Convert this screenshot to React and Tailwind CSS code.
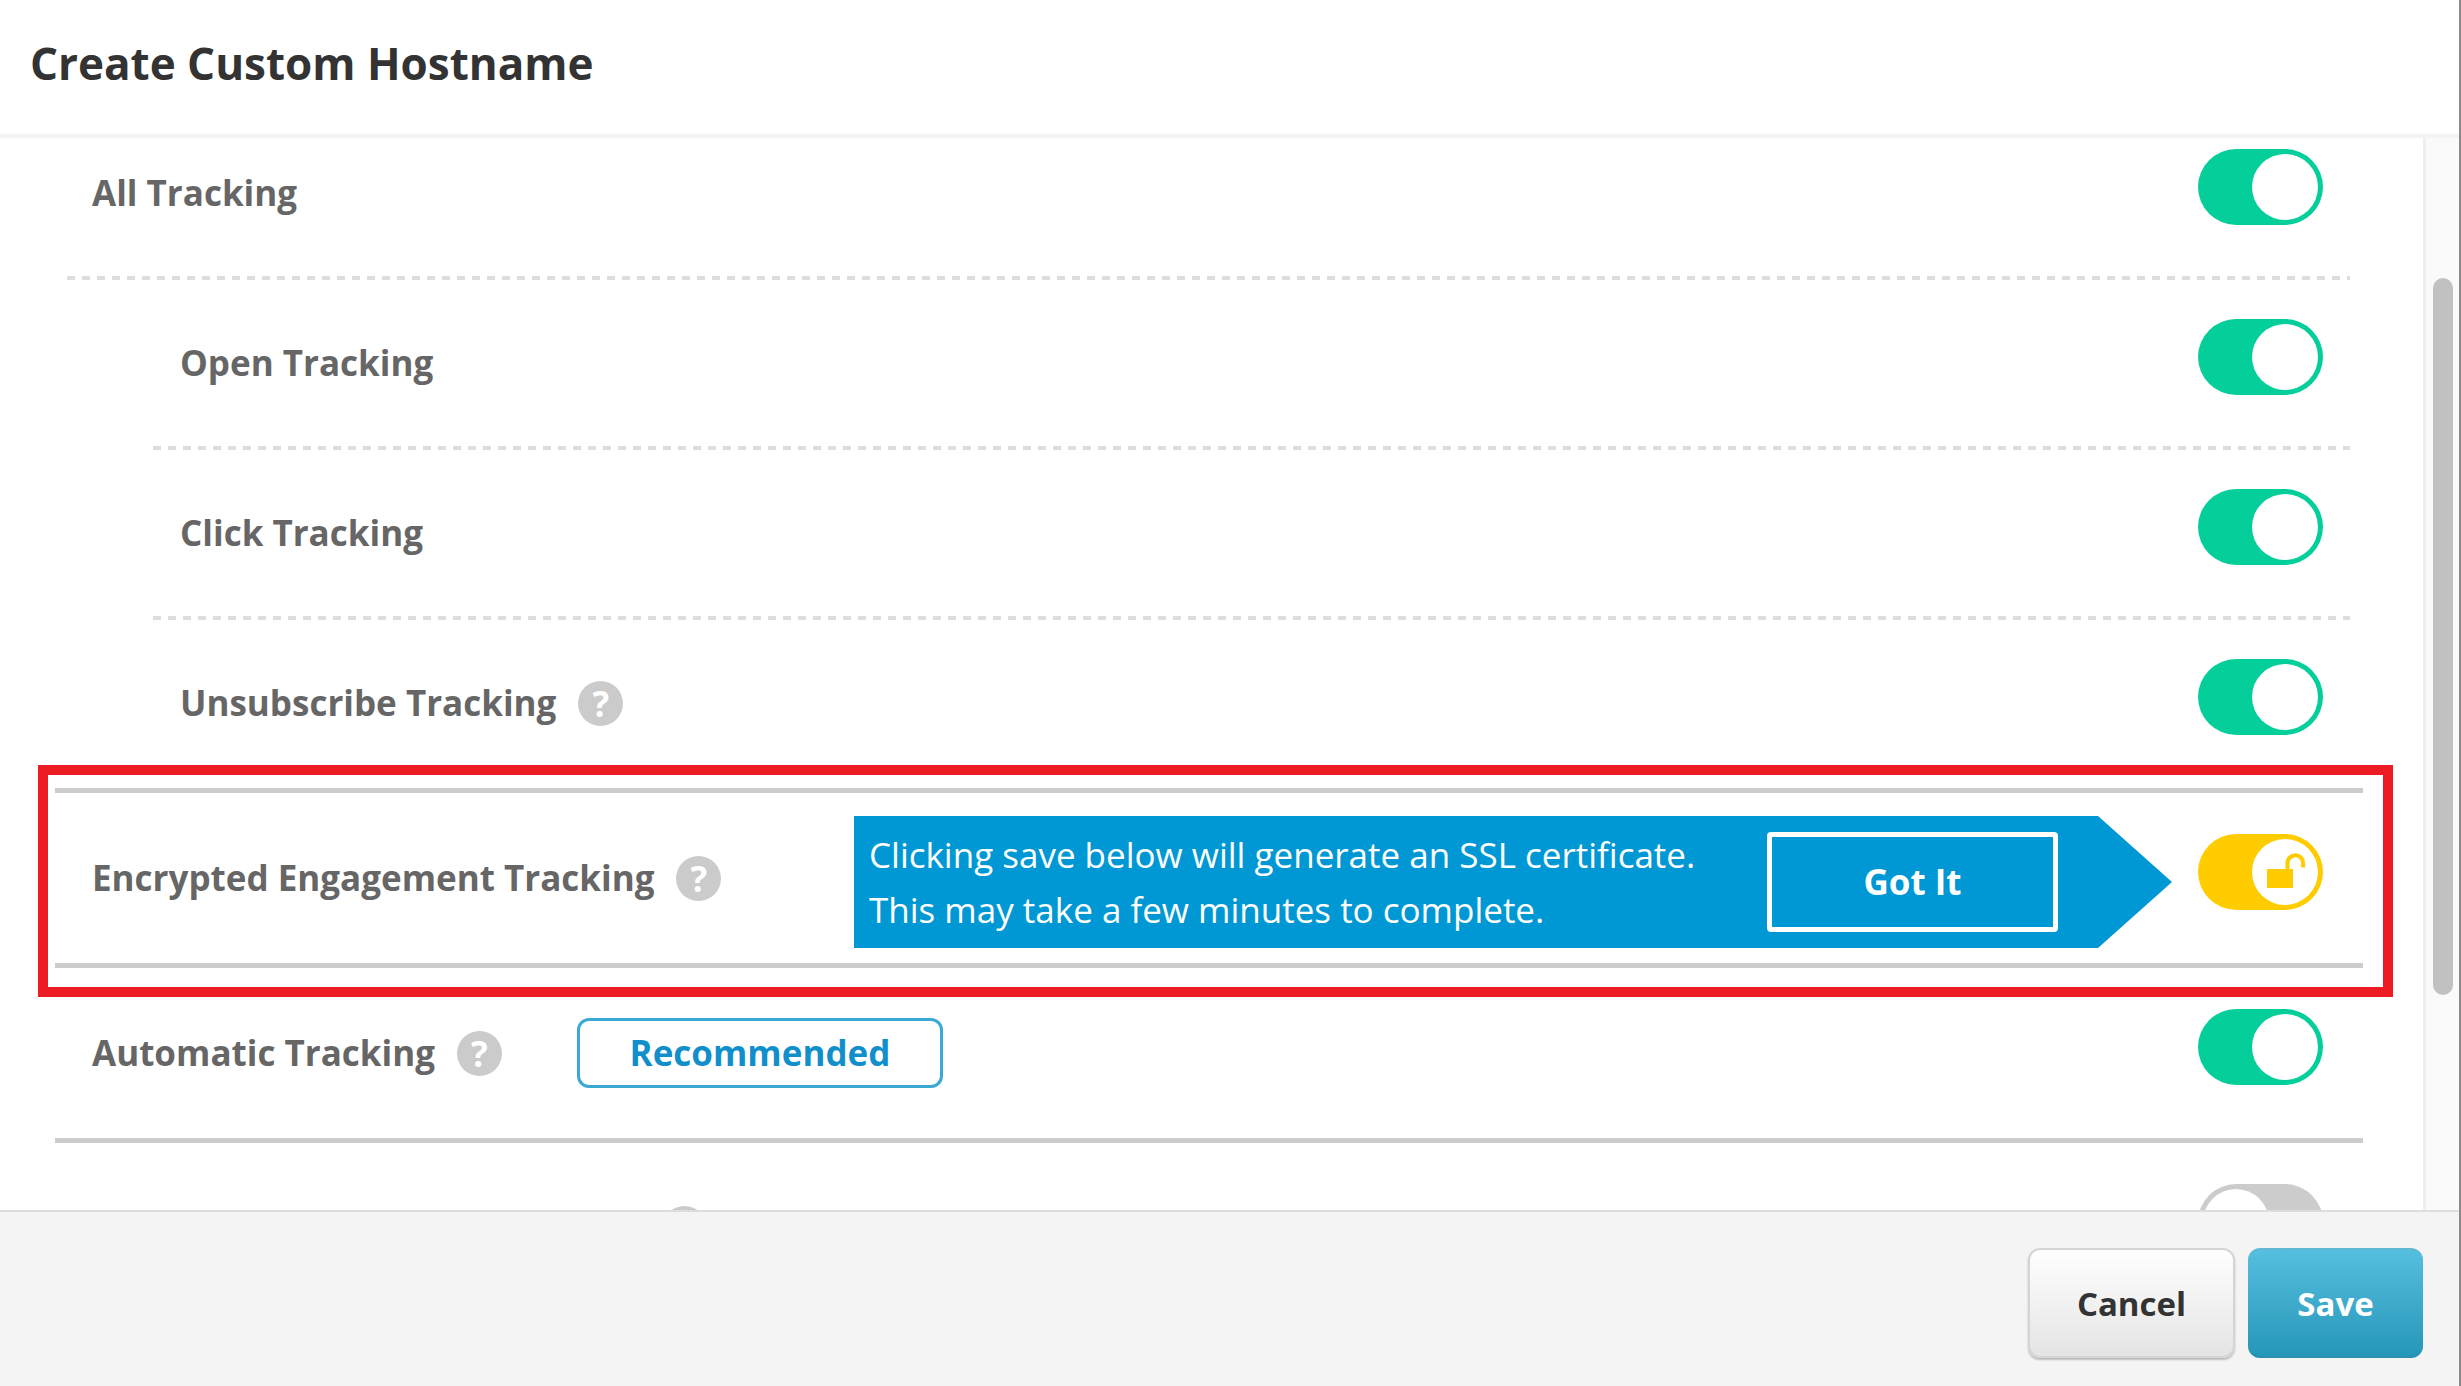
import React, { useState } from 'react';

function HelpIcon({ children = '?' }) {
  return (
    <button
      type="button"
      aria-label="Help"
      className="flex size-[45px] shrink-0 items-center justify-center rounded-full bg-[#cbcbcb] text-[35px] leading-none font-bold text-white"
    >
      {children}
    </button>
  );
}

function Toggle({ id, label, checked, onChange, locked }) {
  const onColor = locked ? 'checked:bg-[#ffcc00]' : 'checked:bg-[#04cf9a]';
  return (
    <span className="relative mb-3 flex shrink-0">
      <input
        id={id}
        type="checkbox"
        aria-label={label}
        checked={checked}
        onChange={onChange}
        className={`h-[76px] w-[125px] cursor-pointer appearance-none rounded-full bg-[#cccccc] p-[5px] before:block before:size-[66px] before:rounded-full before:bg-white checked:before:ml-auto ${onColor}`}
      />
      {locked && (
        <svg
          viewBox="0 0 40 36"
          className="pointer-events-none absolute top-[19px] right-[17px] h-9 w-10"
          fill="none"
        >
          <rect x="1" y="16" width="26" height="19" fill="#ffcc00" />
          <path d="M21.5 17V10a7.8 7.8 0 0 1 15.6 0v4.5" stroke="#ffcc00" strokeWidth="4" />
        </svg>
      )}
    </span>
  );
}

function DottedLine({ className }) {
  return (
    <div
      className={`absolute right-[13px] -bottom-[2px] h-1 bg-[repeating-linear-gradient(90deg,#dddddd_0_8px,transparent_8px_15px)] ${className}`}
    />
  );
}

const TRACKING_ROWS = [
  { id: 'all', label: 'All Tracking', indent: 'pl-[37px]', line: 'left-3' },
  { id: 'open', label: 'Open Tracking', indent: 'pl-[125px]', line: 'left-[98px]' },
  { id: 'click', label: 'Click Tracking', indent: 'pl-[125px]', line: 'left-[98px]' },
  { id: 'unsubscribe', label: 'Unsubscribe Tracking', indent: 'pl-[125px]', help: true },
];

function App() {
  const [settings, setSettings] = useState({
    all: true,
    open: true,
    click: true,
    unsubscribe: true,
    encrypted: true,
    automatic: true,
    other: false,
  });

  const toggle = (id) => () => setSettings((s) => ({ ...s, [id]: !s[id] }));

  return (
    <div className="flex h-screen flex-col overflow-hidden border-r-2 border-[#8a8a8a] bg-white font-['Open_Sans',sans-serif] text-[35px] text-[#666666]">
      {/* Header */}
      <header className="flex h-[138px] shrink-0 items-center border-b-4 border-[#f3f3f3] px-[30px] pb-2">
        <h1 className="text-[44px] leading-none font-bold text-[#333333]">Create Custom Hostname</h1>
      </header>

      {/* Scrolled settings list */}
      <main className="flex min-h-0 flex-1">
        <div className="min-w-0 flex-1 overflow-hidden pr-[60px] pl-[55px]">
          <div className="-mt-[30px]">
            {TRACKING_ROWS.map((row) => (
              <div key={row.id} className={`relative flex h-[170px] items-center gap-[22px] pr-10 ${row.indent}`}>
                <label htmlFor={row.id} className="font-bold">{row.label}</label>
                {row.help && <HelpIcon />}
                <div className="flex-1" />
                <Toggle id={row.id} checked={settings[row.id]} onChange={toggle(row.id)} />
                {row.line && <DottedLine className={row.line} />}
              </div>
            ))}
          </div>

          {/* Encrypted tracking, outlined in red */}
          <div className="relative flex h-[175px] items-center gap-[22px] border-t-5 border-[#cccccc] pr-10 pl-[37px]">
            <label htmlFor="encrypted" className="font-bold">Encrypted Engagement Tracking</label>
            <HelpIcon />
            <div className="mt-2 mr-1 ml-auto flex h-[132px] w-[1318px] items-center justify-between bg-[#0098d4] pr-[114px] pl-[15px] text-white [clip-path:polygon(0_0,calc(100%-74px)_0,100%_50%,calc(100%-74px)_100%,0_100%)]">
              <p className="leading-[55px] whitespace-nowrap">
                Clicking save below will generate an SSL certificate.
                <br />
                This may take a few minutes to complete.
              </p>
              <button type="button" className="h-[100px] w-[291px] rounded-sm border-5 border-white font-bold">
                Got It
              </button>
            </div>
            <Toggle id="encrypted" locked checked={settings.encrypted} onChange={toggle('encrypted')} />
            <div className="pointer-events-none absolute -top-[28px] -right-[30px] -bottom-[34px] -left-[17px] border-10 border-[#ed1c24]" />
          </div>

          <div className="flex h-[175px] items-center gap-[22px] border-t-5 border-[#cccccc] pr-10 pl-[37px]">
            <label htmlFor="automatic" className="font-bold">Automatic Tracking</label>
            <HelpIcon />
            <span className="ml-[53px] flex h-[70px] w-[366px] items-center justify-center rounded-xl border-3 border-[#3ba9d6] font-bold text-[#118fcb]">
              Recommended
            </span>
            <div className="flex-1" />
            <Toggle id="automatic" checked={settings.automatic} onChange={toggle('automatic')} />
          </div>

          <div className="flex h-[175px] items-center justify-between border-t-5 border-[#cccccc] pr-10 pl-[607px]">
            <HelpIcon>{null}</HelpIcon>
            <Toggle id="other" label="Other tracking" checked={settings.other} onChange={toggle('other')} />
          </div>
        </div>

        {/* Scrollbar */}
        <div className="w-9 shrink-0 border-l-3 border-[#eeeeee] bg-[#fafafa] pt-[140px] pl-[7px]">
          <div className="h-[717px] w-5 rounded-full bg-[#c1c1c1]" />
        </div>
      </main>

      {/* Footer */}
      <footer className="flex h-[176px] shrink-0 items-start justify-end gap-[13px] border-t-2 border-[#dddddd] bg-[#f4f4f4] pt-9 pr-9 text-[33px] font-bold">
        <button
          type="button"
          className="h-[110px] w-[207px] rounded-xl border-2 border-[#d4d4d4] bg-linear-to-b from-white to-[#e4e4e4] pt-0.5 text-[#333333] shadow-[0_2px_2px_#bbbbbb]"
        >
          Cancel
        </button>
        <button
          type="button"
          className="h-[110px] w-[175px] rounded-xl border-y-2 border-t-[#62b8d4] border-b-[#2a8fb0] bg-linear-to-b from-[#55bfe0] to-[#2497b9] pt-0.5 text-white"
        >
          Save
        </button>
      </footer>
    </div>
  );
}

export default App;
